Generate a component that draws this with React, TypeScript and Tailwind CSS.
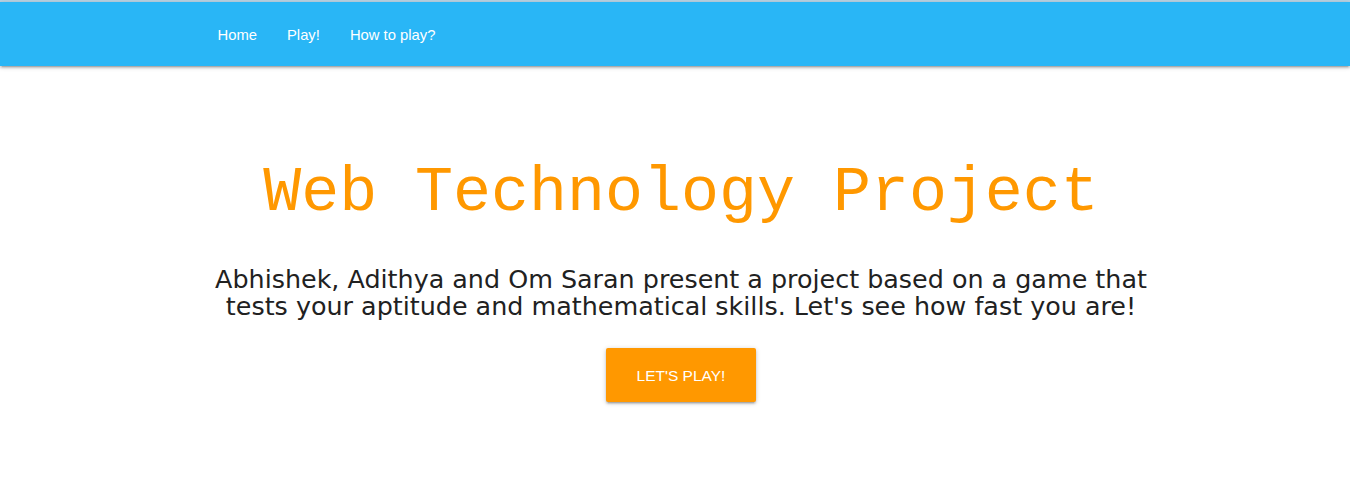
const App = () => {
  return (
    <div className="min-h-screen bg-white" style={{ fontFamily: '"Liberation Sans", Arial, sans-serif' }}>
      <div className="h-[2px] bg-[#b9d3e4]"></div>
      <nav className="h-16 bg-[#29b6f6] shadow-[0_2px_2px_0_rgba(0,0,0,0.14),0_3px_1px_-2px_rgba(0,0,0,0.12),0_1px_5px_0_rgba(0,0,0,0.2)]">
        <div className="mx-auto w-[70%] h-full">
          <ul className="flex h-full items-center pt-[3px] text-[14.8px] text-white">
            <li className="px-[15px]">Home</li>
            <li className="px-[15px]">Play!</li>
            <li className="px-[15px]">How to play?</li>
          </ul>
        </div>
      </nav>

      <div className="mx-auto w-[70%] pl-[12px] flex flex-col items-center text-center">
        <h1
          className="mt-[96px] text-[63.3px] leading-none text-[#ff9800]"
          style={{ fontFamily: '"Liberation Mono", "Courier New", monospace' }}
        >
          Web Technology Project
        </h1>
        <p
          className="mt-[41px] text-[25.4px] leading-[27px] text-[#212121]"
          style={{ fontFamily: '"DejaVu Sans", Verdana, sans-serif' }}
        >
          Abhishek, Adithya and Om Saran present a project based on a game that tests your aptitude and mathematical skills. Let's see how fast you are!
        </p>
        <button className="mt-[28px] w-[150px] h-[54px] rounded-[2px] bg-[#ff9800] text-[15.5px] uppercase text-white shadow-[0_2px_2px_0_rgba(0,0,0,0.14),0_3px_1px_-2px_rgba(0,0,0,0.12),0_1px_5px_0_rgba(0,0,0,0.2)]">
          Let's play!
        </button>
      </div>
    </div>
  )
}

export default App
